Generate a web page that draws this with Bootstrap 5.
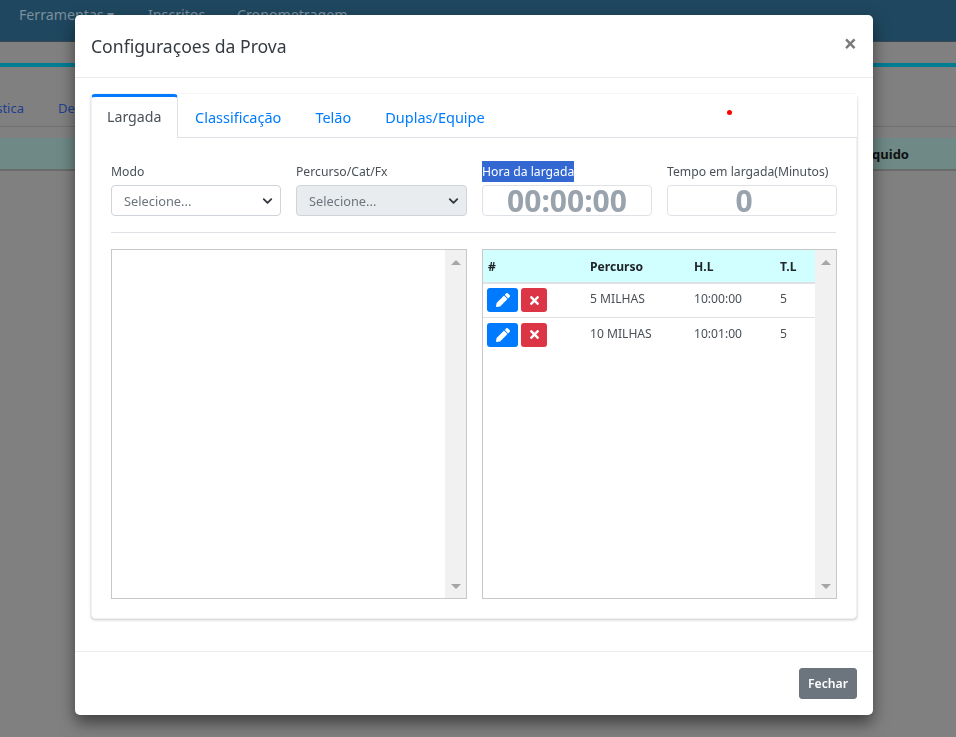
<!DOCTYPE html>
<html lang="pt">
<head>
<meta charset="utf-8">
<title>Configurações da Prova</title>
<link rel="stylesheet" href="https://cdn.jsdelivr.net/npm/bootstrap@5.3.0/dist/css/bootstrap.min.css">
<style>
html,body{height:100%;overflow:hidden}
body{background:#808080;font-family:"Noto Sans","Lato",sans-serif;font-size:13px;color:#212529}
.page-bar{height:42px;background:#1f475f;padding-left:19px;border-bottom:1px solid #3a4a55}
.page-bar span{color:#7c8f9c;font-size:14.2px;line-height:30px}
.bar-a{width:129px}
.bar-b{width:89px}
.page-stripe{height:4px;background:#007c93;margin-top:21px}
.page-tabs{height:60px;padding:32px 0 0 0;border-bottom:1px solid #707070;color:#1f3f8f;font-size:13px;overflow:hidden}
.tab-cut{width:58px;flex:none;display:flex;justify-content:flex-end;padding-right:34px;white-space:nowrap}
.page-head{margin-top:11px;height:33px;background:#6e8986;border-bottom:2px solid #6a6a6a;text-align:right;padding:7px 47px 0 0;font-weight:700;color:#111}
.shot-dialog{position:fixed;top:15px;left:75px;width:798px;height:700px;background:#fff;border-radius:5px;box-shadow:0 8px 16px rgba(0,0,0,.5);margin:0;border:0;display:flex;flex-direction:column}
.shot-header{height:63px;padding:2px 16px 0;border-bottom:1px solid #e9ecef;flex:none}
.shot-header h5{font-size:17.6px;margin:0;font-weight:400;color:#343a40}
.shot-close{position:absolute;top:17px;right:16px;font-size:23px;font-weight:700;color:#7b7b7b;line-height:23px;border:0;background:none;padding:0}
.shot-body{flex:1;padding:16px;min-height:0}
.shot-card{height:525px;border:1px solid #f0f0f0;box-shadow:0 0 1px rgba(0,0,0,.125),0 1px 3px rgba(0,0,0,.2);border-radius:4px;position:relative}
.shot-tabs{height:44px;background:#fff;border-bottom:1px solid #dee2e6;margin:-1px -1px 0}
.shot-tabs .nav-link{border:0;height:43px;padding:12px 17px 0;color:#007bff;font-size:14.5px;line-height:22px;border-radius:0;margin:0}
.shot-tabs .nav-link.active{color:#495057;font-size:14.2px;border-top:3px solid #007bff;border-right:1px solid #dee2e6;border-left:1px solid #f0f0f0;border-radius:4px 4px 0 0;padding-top:9px;height:44px;width:87px;padding-left:15px;padding-right:0;background:#fff;white-space:nowrap}
.red-dot{position:absolute;left:635px;top:15px;width:5px;height:5px;border-radius:50%;background:#f00}
.shot-pane{padding:23px 20px 0 19px}
.shot-row{display:grid;grid-template-columns:170px 171px 170px 170px;column-gap:15px}
.shot-label{display:block;height:21px;line-height:22px;margin:0 0 3px;color:#495057;font-size:12.2px;white-space:nowrap}
.shot-label mark{background:#3367d1;color:#fff;padding:0;display:inline-block;height:21px}
.shot-field{height:31px;font-size:12.8px;padding:5px 12px 3px;border-color:#ced4da;color:#6c757d;border-radius:4px;background-image:url("data:image/svg+xml,%3csvg xmlns='http://www.w3.org/2000/svg' viewBox='0 0 16 16'%3e%3cpath fill='none' stroke='%23343a40' stroke-linecap='round' stroke-linejoin='round' stroke-width='3' d='m2 5 6 6 6-6'/%3e%3c/svg%3e");background-position:right 6px center;background-size:13px 10px}
.shot-field:disabled{background-color:#e9ecef}
.time-input{height:31px;padding:0;text-align:center;font-size:30px;font-weight:700;border-radius:4px;line-height:29px}
.time-input::placeholder{color:#99a3ad;opacity:1}
.time-zero{padding-right:16px}
.shot-rule{margin:16px 0;border:0;border-top:1px solid #dee2e6;opacity:1}
.shot-boxes{display:grid;grid-template-columns:356px 355px;column-gap:15px}
.shot-box{height:350px;border:1px solid #c8c8c8;display:flex}
.box-main{flex:1;min-width:0}
.box-scroll{width:21px;background:#f1f1f1;display:flex;flex-direction:column;justify-content:space-between;align-items:center;padding:10px 0 9px}
.arrow-up{width:0;height:0;border-left:5px solid transparent;border-right:5px solid transparent;border-bottom:5px solid #a6a6a6}
.arrow-down{width:0;height:0;border-left:5px solid transparent;border-right:5px solid transparent;border-top:5px solid #a6a6a6}
.shot-table{margin:0;font-size:12.1px;table-layout:fixed;color:#495057}
.shot-table th{background:#d1ffff;height:33px;padding:3px 5px 0;vertical-align:middle;border-bottom:2px solid #dee2e6;color:#212529;font-weight:700}
.shot-table td{height:34px;padding:0 5px 2px;vertical-align:middle;color:#495057}
.shot-table tbody tr:last-child td{border-bottom:0;padding-bottom:0}
.shot-table td.act{padding:4px 4px 0;vertical-align:top}
.shot-table tbody tr:last-child td.act{padding-top:5px}
.mini-btn{height:24px;padding:0;display:inline-flex;align-items:center;justify-content:center;border:0;border-radius:3px;vertical-align:top}
.mini-edit{width:31px;background:#007bff}
.mini-del{width:26px;background:#dc3545;margin-left:3px}
.mini-btn svg{fill:#fff;display:block}
.shot-footer{height:64px;border-top:1px solid #e9ecef;padding:16px;flex:none}
.shot-footer .btn{width:58px;height:31px;padding:2px 0 0;font-size:12.2px;background:#6c757d;border-color:#6c757d;border-radius:3px;font-weight:600}
</style>
</head>
<body>
<div class="page-bar d-flex"><span class="bar-a">Ferramentas ▾</span><span class="bar-b">Inscritos</span><span>Cronometragem</span></div>
<div class="page-stripe"></div>
<div class="page-tabs d-flex"><span class="tab-cut">Estatística</span><span>Desempenho</span></div>
<div class="page-head">Líquido</div>

<div class="shot-dialog modal-content">
  <div class="shot-header d-flex align-items-center"><h5>Configuraçoes da Prova</h5><button class="shot-close" type="button" aria-label="Fechar">×</button></div>
  <div class="shot-body">
    <div class="shot-card card">
      <ul class="nav shot-tabs">
        <li class="nav-item"><a class="nav-link active" href="#">Largada</a></li>
        <li class="nav-item"><a class="nav-link" href="#">Classificação</a></li>
        <li class="nav-item"><a class="nav-link" href="#">Telão</a></li>
        <li class="nav-item"><a class="nav-link" href="#">Duplas/Equipe</a></li>
      </ul>
      <span class="red-dot"></span>
      <div class="shot-pane">
        <div class="shot-row">
          <div><label class="shot-label">Modo</label><select class="form-select shot-field"><option>Selecione...</option></select></div>
          <div><label class="shot-label">Percurso/Cat/Fx</label><select class="form-select shot-field" disabled><option>Selecione...</option></select></div>
          <div><label class="shot-label"><mark>Hora da largada</mark></label><input class="form-control time-input" placeholder="00:00:00"></div>
          <div><label class="shot-label">Tempo em largada(Minutos)</label><input class="form-control time-input time-zero" placeholder="0"></div>
        </div>
        <hr class="shot-rule">
        <div class="shot-boxes">
          <div class="shot-box"><div class="box-main"></div><div class="box-scroll"><span class="arrow-up"></span><span class="arrow-down"></span></div></div>
          <div class="shot-box">
            <div class="box-main">
              <table class="table shot-table">
                <colgroup><col style="width:102px"><col style="width:104px"><col style="width:86px"><col></colgroup>
                <thead><tr><th>#</th><th>Percurso</th><th>H.L</th><th>T.L</th></tr></thead>
                <tbody>
                  <tr><td class="act"><button class="mini-btn mini-edit" type="button" aria-label="Editar"><svg width="14" height="14" viewBox="0 0 512 512"><path d="M497.9 142.1l-46.1 46.1c-4.7 4.7-12.3 4.7-17 0l-111-111c-4.7-4.7-4.7-12.3 0-17l46.1-46.1c18.7-18.7 49.1-18.7 67.9 0l60.1 60.1c18.8 18.7 18.8 49.1 0 67.9zM284.2 99.8L21.6 362.4.4 483.9c-2.9 16.4 11.4 30.6 27.8 27.8l121.5-21.3 262.6-262.6c4.7-4.7 4.7-12.3 0-17l-111-111c-4.8-4.7-12.4-4.7-17.1 0z"/></svg></button><button class="mini-btn mini-del" type="button" aria-label="Excluir"><svg width="9" height="13" viewBox="0 0 352 512"><path d="M242.72 256l100.07-100.07c12.28-12.28 12.28-32.19 0-44.48l-22.24-22.24c-12.28-12.28-32.19-12.28-44.48 0L176 189.28 75.93 89.21c-12.28-12.28-32.19-12.28-44.48 0L9.21 111.45c-12.28 12.28-12.28 32.19 0 44.48L109.28 256 9.21 356.07c-12.28 12.28-12.28 32.19 0 44.48l22.24 22.24c12.28 12.28 32.2 12.28 44.48 0L176 322.72l100.07 100.07c12.28 12.28 32.2 12.28 44.48 0l22.24-22.24c12.28-12.28 12.28-32.19 0-44.48L242.72 256z"/></svg></button></td><td>5 MILHAS</td><td>10:00:00</td><td>5</td></tr>
                  <tr><td class="act"><button class="mini-btn mini-edit" type="button" aria-label="Editar"><svg width="14" height="14" viewBox="0 0 512 512"><path d="M497.9 142.1l-46.1 46.1c-4.7 4.7-12.3 4.7-17 0l-111-111c-4.7-4.7-4.7-12.3 0-17l46.1-46.1c18.7-18.7 49.1-18.7 67.9 0l60.1 60.1c18.8 18.7 18.8 49.1 0 67.9zM284.2 99.8L21.6 362.4.4 483.9c-2.9 16.4 11.4 30.6 27.8 27.8l121.5-21.3 262.6-262.6c4.7-4.7 4.7-12.3 0-17l-111-111c-4.8-4.7-12.4-4.7-17.1 0z"/></svg></button><button class="mini-btn mini-del" type="button" aria-label="Excluir"><svg width="9" height="13" viewBox="0 0 352 512"><path d="M242.72 256l100.07-100.07c12.28-12.28 12.28-32.19 0-44.48l-22.24-22.24c-12.28-12.28-32.19-12.28-44.48 0L176 189.28 75.93 89.21c-12.28-12.28-32.19-12.28-44.48 0L9.21 111.45c-12.28 12.28-12.28 32.19 0 44.48L109.28 256 9.21 356.07c-12.28 12.28-12.28 32.19 0 44.48l22.24 22.24c12.28 12.28 32.2 12.28 44.48 0L176 322.72l100.07 100.07c12.28 12.28 32.2 12.28 44.48 0l22.24-22.24c12.28-12.28 12.28-32.19 0-44.48L242.72 256z"/></svg></button></td><td>10 MILHAS</td><td>10:01:00</td><td>5</td></tr>
                </tbody>
              </table>
            </div>
            <div class="box-scroll"><span class="arrow-up"></span><span class="arrow-down"></span></div>
          </div>
        </div>
      </div>
    </div>
  </div>
  <div class="shot-footer d-flex justify-content-end"><button class="btn btn-secondary" type="button">Fechar</button></div>
</div>
<script src="https://cdn.jsdelivr.net/npm/bootstrap@5.3.0/dist/js/bootstrap.bundle.min.js"></script>
</body>
</html>
